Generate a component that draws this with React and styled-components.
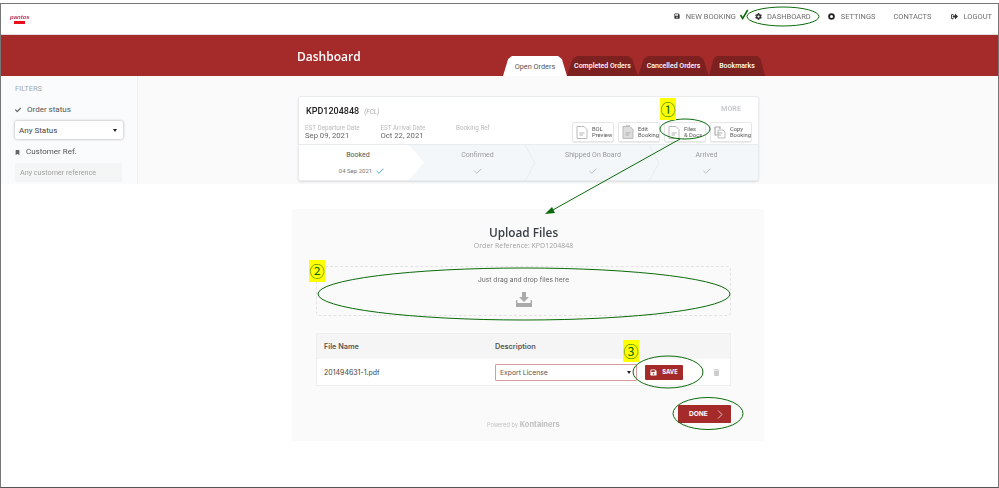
import React from "react";
import styled, { createGlobalStyle } from "styled-components";
import { FaSave, FaCog, FaBookmark, FaSignOutAlt, FaTrash, FaCheck } from "react-icons/fa";

const Global = createGlobalStyle`
  html, body { margin: 0; padding: 0; background: #fff; }
  body { font-family: Roboto, "Liberation Sans", sans-serif; }
  * { box-sizing: border-box; }
`;

const Canvas = styled.div`
  position: relative;
  width: 999px;
  height: 488px;
  padding-top: 3px;
  overflow: hidden;
`;
const Frame = styled.div`
  width: 999px;
  height: 485px;
  border: 1px solid #777;
  border-bottom-color: #555;
`;
const Soft = styled.div`
  filter: blur(0.3px);
`;
const TopBar = styled.header`
  height: 31px;
  display: flex;
  align-items: center;
  justify-content: space-between;
  padding: 0 6px 6px 9px;
  border-bottom: 1px solid #ddd;
`;
const Logo = styled.div`
  display: flex;
  flex-direction: column;
  align-items: center;
  gap: 1px;
  margin-top: 5px;
`;
const LogoWord = styled.span`
  font: italic 700 6px/6px "Liberation Sans", sans-serif;
  color: #b8325a;
`;
const LogoBar = styled.span`
  width: 11px;
  height: 3px;
  background: #e8101c;
`;
const Nav = styled.nav`
  display: flex;
  align-items: center;
`;
const NavItem = styled.a`
  display: flex;
  align-items: center;
  gap: ${(p) => p.$iconGap || 6}px;
  margin-left: ${(p) => p.$gap}px;
  font-size: 7.5px;
  color: #6e6e6e;
  svg { color: #333; }
`;
const Band = styled.div`
  height: 41px;
  background: #a52a2a;
  display: flex;
  align-items: flex-end;
  padding-left: 296px;
`;
const Title = styled.h1`
  margin: 0 0 9px;
  width: 206px;
  font: 600 12px/20px "Open Sans", sans-serif;
  color: #fff;
`;
const Tabs = styled.div`
  display: flex;
  align-items: flex-end;
`;
const Tab = styled.div`
  height: 20px;
  width: ${(p) => p.$w}px;
  display: flex;
  align-items: center;
  justify-content: center;
  font-size: ${(p) => (p.$active ? 7.3 : 7)}px;
  font-weight: ${(p) => (p.$active ? 400 : 500)};
  color: ${(p) => (p.$active ? "#555" : "#fff")};
  background: ${(p) => (p.$active ? "#fff" : "#7d2020")};
  clip-path: polygon(0 100%, 8% 15%, 14% 0, 86% 0, 92% 15%, 100% 100%);
`;
const Body = styled.div`
  height: 108px;
  display: flex;
  background: #fafafa;
  overflow: hidden;
`;
const Sidebar = styled.aside`
  width: 137px;
  background: #f9fbfc;
  border-right: 1px solid #eef0f2;
  padding: 8px 0 0 14px;
`;
const FilterTitle = styled.div`
  font-size: 7.5px;
  line-height: 9px;
  color: #a5a9ad;
  margin-bottom: 12px;
`;
const FilterLabel = styled.div`
  display: flex;
  align-items: center;
  gap: 6px;
  font-size: 8px;
  line-height: 10px;
  color: #555;
  margin-bottom: 6px;
  svg { color: #666; }
`;
const StatusSelect = styled.div`
  width: 108px;
  height: 18px;
  background: #fff;
  border-radius: 2px;
  box-shadow: 0 0 3px rgba(0, 0, 0, 0.35);
  display: flex;
  align-items: center;
  justify-content: space-between;
  padding: 0 6px 0 4px;
  font-size: 8px;
  color: #444;
  margin-bottom: 8px;
`;
const Caret = styled.span`
  width: 0;
  height: 0;
  border-left: 2.5px solid transparent;
  border-right: 2.5px solid transparent;
  border-top: 3px solid #222;
`;
const RefInput = styled.div`
  width: 107px;
  height: 19px;
  background: #f4f5f5;
  border-radius: 2px;
  padding-left: 5px;
  font-size: 7.2px;
  line-height: 19px;
  color: #a0a0a0;
`;
const Main = styled.main`
  flex: 1;
  padding: 20px 0 0 160px;
`;
const Card = styled.section`
  width: 461px;
  height: 85px;
  background: #fff;
  border: 1px solid #e8ecef;
  border-radius: 3px;
  box-shadow: 0 1px 2px rgba(0, 0, 0, 0.12);
  display: flex;
  flex-direction: column;
  overflow: hidden;
`;
const CardTop = styled.div`
  height: 47px;
  display: flex;
  justify-content: space-between;
  padding: 7px 6px 0 7px;
`;
const OrderId = styled.div`
  display: flex;
  align-items: baseline;
  gap: 5px;
  font-size: 9px;
  font-weight: 500;
  color: #222;
  line-height: 12px;
  margin: 1px 0 7px;
`;
const Fcl = styled.em`
  font-size: 6.5px;
  font-weight: 400;
  color: #aaa;
`;
const Dates = styled.div`
  display: flex;
`;
const DateCol = styled.div`
  width: 75.5px;
  margin-left: -1px;
  margin-right: 1px;
`;
const DateLabel = styled.div`
  font-size: 6.3px;
  line-height: 7px;
  color: #bbb;
`;
const DateValue = styled.div`
  font-size: 7.7px;
  line-height: 8px;
  color: #666;
`;
const CardRight = styled.div`
  display: flex;
  flex-direction: column;
  align-items: flex-end;
`;
const More = styled.div`
  font-size: 7.2px;
  font-weight: 700;
  line-height: 9px;
  color: #c8ccd0;
  margin: 0 11px 9px 0;
`;
const Actions = styled.div`
  display: flex;
  gap: 4px;
`;
const ActionBtn = styled.div`
  width: 42px;
  height: 20px;
  background: #fff;
  border: 1px solid #e6e6e6;
  border-radius: 2px;
  box-shadow: 0 1px 1px rgba(0, 0, 0, 0.08);
  display: flex;
  align-items: center;
  gap: 4px;
  padding-left: 3px;
  font-size: 5.8px;
  line-height: 6px;
  color: #555;
`;
const Stepper = styled.div`
  flex: 1;
  display: flex;
  background: #f4f7f9;
  border-top: 1px solid #e8ecef;
`;
const Step = styled.div`
  position: relative;
  width: ${(p) => p.$w}px;
  padding: 6px ${(p) => (p.$active ? 7 : 0)}px 0 0;
  text-align: center;
  font-size: 7px;
  line-height: 9px;
  color: ${(p) => (p.$active ? "#555" : "#999")};
  background: ${(p) => (p.$active ? "#fff" : "transparent")};
  clip-path: ${(p) => (p.$active ? "polygon(0 0, 88% 0, 100% 50%, 88% 100%, 0 100%)" : "none")};
`;
const StepMeta = styled.div`
  margin-top: 6px;
  padding-left: ${(p) => p.$indent || 0}px;
  height: 9px;
  display: flex;
  align-items: center;
  justify-content: center;
  gap: 4px;
  font-size: 6px;
  color: #777;
`;
const Chevron = styled.svg`
  position: absolute;
  right: -6px;
  top: 0;
`;
const Upload = styled.section`
  width: 472px;
  height: 232px;
  margin: 25px 0 0 291px;
  background: #fafafa;
  padding: 15px 33px 0 24px;
  display: flex;
  flex-direction: column;
`;
const UploadTitle = styled.h2`
  margin: 0;
  text-align: center;
  font: 600 11.8px/17px "Open Sans", sans-serif;
  color: #3a3f45;
`;
const UploadRef = styled.div`
  text-align: center;
  font: 400 7px/9px "Open Sans", sans-serif;
  color: #a4a4a4;
`;
const DropZone = styled.div`
  height: 50px;
  margin-top: 16px;
  border: 1px dashed #e2e2e2;
  border-radius: 4px;
  display: flex;
  flex-direction: column;
  align-items: center;
  padding-top: 9px;
  gap: 7px;
  font: 400 6.7px/9px Inter, sans-serif;
  color: #666;
`;
const Table = styled.div`
  margin-top: 17px;
  height: 53px;
  border: 1px solid #eee;
  background: #fff;
`;
const THead = styled.div`
  height: 25px;
  background: #f5f5f5;
  display: flex;
  align-items: center;
  padding-left: 7px;
  font: 600 7.3px/9px Inter, sans-serif;
  color: #555;
`;
const TRow = styled.div`
  height: 26px;
  display: flex;
  align-items: center;
  padding-left: 7px;
  font: 400 7px/9px Inter, sans-serif;
  color: #444;
`;
const NameCol = styled.div`
  width: 171px;
`;
const DescSelect = styled.div`
  width: 142px;
  height: 17px;
  border: 1px solid #d79a9a;
  border-radius: 1px;
  display: flex;
  align-items: center;
  justify-content: space-between;
  padding: 0 5px 0 4px;
  font-size: 6.8px;
  color: #555;
`;
const SaveBtn = styled.div`
  width: 38px;
  height: 15px;
  margin-left: 8px;
  background: #a52a2a;
  border-radius: 1px;
  display: flex;
  align-items: center;
  justify-content: center;
  gap: 5px;
  font: 700 5.8px/6px Inter, sans-serif;
  color: #fff;
`;
const TrashWrap = styled.div`
  margin-left: 30px;
  display: flex;
  color: #ccc;
`;
const Footer = styled.div`
  display: flex;
  margin-top: 19px;
  position: relative;
`;
const Powered = styled.div`
  position: absolute;
  left: 171px;
  top: 15px;
  display: flex;
  align-items: baseline;
  gap: 2px;
  font: 400 5.5px/9px Inter, sans-serif;
  color: #c4c4c4;
  b { font-size: 7.5px; font-weight: 700; color: #c0c0c0; }
`;
const DoneBtn = styled.div`
  margin-left: auto;
  width: 53px;
  height: 18px;
  background: #a52a2a;
  border-radius: 1px;
  display: flex;
  align-items: center;
  padding-left: 11px;
  gap: 9px;
  font: 700 6.6px/7px Inter, sans-serif;
  color: #fff;
`;
const Overlay = styled.svg`
  position: absolute;
  left: 0;
  top: 0;
  pointer-events: none;
`;
const Badge = styled.span`
  position: absolute;
  left: ${(p) => p.$x}px;
  top: ${(p) => p.$y}px;
  width: 16px;
  height: 22px;
  background: #ffff00;
  color: #0a6a0a;
  display: flex;
  align-items: center;
  justify-content: center;
  font: 400 15px/22px "Noto Sans CJK JP", "DejaVu Sans", sans-serif;
`;

const DocIcon = ({ kind }) => (
  <svg width="12" height="14" viewBox="0 0 12 14" fill="none">
    {kind === "copy" && <path d="M1 2h5v2M1 2v8h2" stroke="#aaa" strokeWidth="1.2" />}
    {kind === "clip" && <rect x="4" y="0.5" width="4" height="2.5" fill="#999" />}
    <path
      d={kind === "copy" ? "M4 5h5l2 2v6H4z" : "M1 1.5h7l3 3v9H1z"}
      fill={kind === "clip" ? "#ddd" : "#fff"}
      stroke="#bbb"
    />
    <path d="M3.5 8h5M3.5 10h3.5" stroke="#aaa" strokeWidth="0.9" />
  </svg>
);
const Tick = ({ c = "#bbb", s = 8 }) => (
  <svg width={s} height={s * 0.75} viewBox="0 0 8 6" fill="none">
    <path d="M0.5 3l2.4 2.3L7.5 0.7" stroke={c} strokeWidth="1" />
  </svg>
);

export default function App() {
  return (
    <Canvas>
      <Global />
      <Frame>
        <Soft>
          <TopBar>
            <Logo>
              <LogoWord>pantos</LogoWord>
              <LogoBar />
            </Logo>
            <Nav>
              <NavItem $gap={0}><FaSave size={6} />NEW BOOKING</NavItem>
              <NavItem $gap={19} $iconGap={5}><FaCog size={7} />DASHBOARD</NavItem>
              <NavItem $gap={17}>
                <svg width="7" height="7" viewBox="0 0 7 7"><circle cx="3.5" cy="3.5" r="2.4" fill="none" stroke="#222" strokeWidth="1.8" /></svg>
                SETTINGS
              </NavItem>
              <NavItem $gap={18}>CONTACTS</NavItem>
              <NavItem $gap={20} $iconGap={5}><FaSignOutAlt size={7} />LOGOUT</NavItem>
            </Nav>
          </TopBar>
          <Band>
            <Title>Dashboard</Title>
            <Tabs>
              <Tab $active $w={64}>Open Orders</Tab>
              <Tab $w={71}>Completed Orders</Tab>
              <Tab $w={71}>Cancelled Orders</Tab>
              <Tab $w={56}>Bookmarks</Tab>
            </Tabs>
          </Band>
          <Body>
            <Sidebar>
              <FilterTitle>FILTERS</FilterTitle>
              <FilterLabel><FaCheck size={6} />Order status</FilterLabel>
              <StatusSelect>Any Status<Caret /></StatusSelect>
              <FilterLabel><FaBookmark size={5} />Customer Ref.</FilterLabel>
              <RefInput>Any customer reference</RefInput>
            </Sidebar>
            <Main>
              <Card>
                <CardTop>
                  <div>
                    <OrderId>KPD1204848 <Fcl>(FCL)</Fcl></OrderId>
                    <Dates>
                      <DateCol><DateLabel>EST Departure Date</DateLabel><DateValue>Sep 09, 2021</DateValue></DateCol>
                      <DateCol><DateLabel>EST Arrival Date</DateLabel><DateValue>Oct 22, 2021</DateValue></DateCol>
                      <DateCol><DateLabel>Booking Ref</DateLabel></DateCol>
                    </Dates>
                  </div>
                  <CardRight>
                    <More>MORE</More>
                    <Actions>
                      <ActionBtn><DocIcon /><span>BOL<br />Preview</span></ActionBtn>
                      <ActionBtn><DocIcon kind="clip" /><span>Edit<br />Booking</span></ActionBtn>
                      <ActionBtn><DocIcon /><span>Files<br />&amp; Docs</span></ActionBtn>
                      <ActionBtn><DocIcon kind="copy" /><span>Copy<br />Booking</span></ActionBtn>
                    </Actions>
                  </CardRight>
                </CardTop>
                <Stepper>
                  <Step $active $w={125}>Booked<StepMeta $indent={7}>04 Sep 2021 <Tick c="#4aa8d8" /></StepMeta></Step>
                  <Step $w={107}>
                    Confirmed<StepMeta><Tick /></StepMeta>
                    <Chevron width="12" height="36" viewBox="0 0 12 36" fill="none"><path d="M0 0l10 18L0 36" stroke="#e8edf0" /></Chevron>
                  </Step>
                  <Step $w={124}>
                    Shipped On Board<StepMeta><Tick /></StepMeta>
                    <Chevron width="12" height="36" viewBox="0 0 12 36" fill="none"><path d="M0 0l10 18L0 36" stroke="#e8edf0" /></Chevron>
                  </Step>
                  <Step $w={103}>Arrived<StepMeta><Tick /></StepMeta></Step>
                </Stepper>
              </Card>
            </Main>
          </Body>
          <Upload>
            <UploadTitle>Upload Files</UploadTitle>
            <UploadRef>Order Reference: KPD1204848</UploadRef>
            <DropZone>
              Just drag and drop files here
              <svg width="16" height="15" viewBox="0 0 16 15">
                <path d="M6 0h4v5h3l-5 5-5-5h3z" fill="#aaa" />
                <path d="M0.7 8v6.3h14.6V8" fill="none" stroke="#aaa" strokeWidth="1.4" />
                <rect x="1" y="11" width="14" height="3" fill="#aaa" />
              </svg>
            </DropZone>
            <Table>
              <THead><NameCol>File Name</NameCol>Description</THead>
              <TRow>
                <NameCol>201494631-1.pdf</NameCol>
                <DescSelect>Export License<Caret /></DescSelect>
                <SaveBtn><FaSave size={7} />SAVE</SaveBtn>
                <TrashWrap><FaTrash size={7} /></TrashWrap>
              </TRow>
            </Table>
            <Footer>
              <Powered>Powered by <b>Kontainers</b></Powered>
              <DoneBtn>
                DONE
                <svg width="6" height="9" viewBox="0 0 6 9" fill="none"><path d="M1 0.5l4 4-4 4" stroke="#e6d0d0" strokeWidth="0.9" /></svg>
              </DoneBtn>
            </Footer>
          </Upload>
        </Soft>
      </Frame>
      <Overlay width="999" height="488" viewBox="0 0 999 488" fill="none">
        <g stroke="#0a6a0a" strokeWidth="1">
          <ellipse cx="783" cy="16.5" rx="36" ry="9.5" />
          <ellipse cx="685" cy="129" rx="25" ry="10" />
          <ellipse cx="524" cy="294" rx="206" ry="26" />
          <ellipse cx="668" cy="372" rx="35" ry="16" />
          <ellipse cx="708" cy="413.5" rx="35" ry="16" />
          <path d="M680 139L551 211" />
        </g>
        <path d="M545 214l7-7 3 6z" fill="#0a6a0a" />
        <path d="M740.5 15l2.2 3.5 5-8.5" stroke="#0a6a0a" strokeWidth="1.6" />
      </Overlay>
      <Badge $x={660} $y={98}>①</Badge>
      <Badge $x={309} $y={260}>②</Badge>
      <Badge $x={623} $y={340}>③</Badge>
    </Canvas>
  );
}
